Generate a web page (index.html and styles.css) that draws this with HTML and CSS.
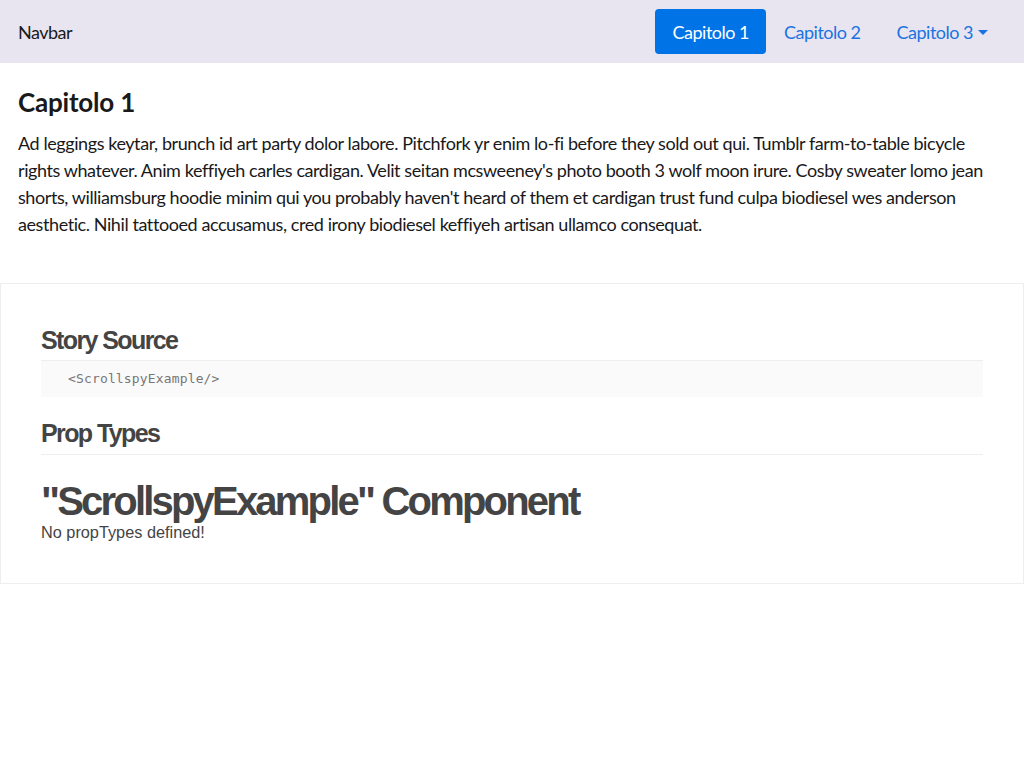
FILE: index.html
```html
<!DOCTYPE html>
<html lang="it">
<head>
<meta charset="utf-8">
<title>Scrollspy</title>
<link rel="stylesheet" href="styles.css">
</head>
<body>
<nav class="navbar">
  <a class="brand" href="#">Navbar</a>
  <ul class="nav">
    <li><a class="nav-link active" href="#c1">Capitolo 1</a></li>
    <li><a class="nav-link" href="#c2">Capitolo 2</a></li>
    <li><a class="nav-link dropdown" href="#c3">Capitolo 3<span class="caret"></span></a></li>
  </ul>
</nav>
<section class="chapter">
  <h4 class="chapter-title">Capitolo 1</h4>
  <p class="chapter-text">Ad leggings keytar, brunch id art party dolor labore. Pitchfork yr enim lo-fi before they sold out qui. Tumblr farm-to-table bicycle rights whatever. Anim keffiyeh carles cardigan. Velit seitan mcsweeney's photo booth 3 wolf moon irure. Cosby sweater lomo jean shorts, williamsburg hoodie minim qui you probably haven't heard of them et cardigan trust fund culpa biodiesel wes anderson aesthetic. Nihil tattooed accusamus, cred irony biodiesel keffiyeh artisan ullamco consequat.</p>
</section>
<div class="info">
  <h1 class="info-h">Story Source</h1>
  <pre class="source">&lt;ScrollspyExample/&gt;</pre>
  <h1 class="info-h info-h2">Prop Types</h1>
  <h2 class="comp-h">"ScrollspyExample" Component</h2>
  <p class="noprops">No propTypes defined!</p>
</div>
</body>
</html>
```
FILE: styles.css
```css
html, body { margin: 0; padding: 0; background: #fff; }
body { font-family: "Lato", "Open Sans", sans-serif; color: #19191a; }

.navbar {
  height: 63px;
  background: #e8e5f1;
  display: flex;
  align-items: center;
  justify-content: space-between;
  padding: 0 18px 0 18px;
  box-sizing: border-box;
}
.brand { color: #19191a; text-decoration: none; font-size: 18px; letter-spacing: -0.5px; }
.nav { list-style: none; margin: 0; padding: 0; display: flex; align-items: center; }
.nav-link {
  display: flex; align-items: center;
  height: 45px; padding: 0 18px; box-sizing: border-box;
  color: #1a73e0; text-decoration: none; font-size: 18px; letter-spacing: -0.5px;
  border-radius: 4px;
}
.nav-link.active { background: #0073e6; color: #fff; padding: 0 17px 0 18px; }
.caret {
  display: inline-block; margin-left: 5px; margin-top: 1px;
  border-left: 5px solid transparent; border-right: 5px solid transparent;
  border-top: 5px solid #1a73e0;
}

.chapter { padding: 24px 18px 45px; }
.chapter-title { margin: 0 0 13px; font-size: 26px; font-weight: 700; line-height: 30px; color: #19191a; letter-spacing: -0.2px; }
.chapter-text { margin: 0; font-size: 18px; line-height: 27px; letter-spacing: -0.42px; }

.info {
  margin: 0;
  border: 1px solid #eee;
  box-shadow: 0 2px 3px rgba(0,0,0,0.05);
  padding: 40px 40px 41px;
  font-family: -apple-system, "Helvetica Neue", "Liberation Sans", Arial, sans-serif;
  color: #444;
}
.info-h {
  margin: 0; font-size: 25px; font-weight: 700; letter-spacing: -1.6px;
  line-height: 32px; padding-bottom: 4px;
  border-bottom: 1px solid #eee;
}
.info-h2 { padding-bottom: 5px; }
.source {
  margin: 0 0 20px; background: #fafafa; padding: 11px 27px;
  font-family: "DejaVu Sans Mono", monospace; font-size: 13px; letter-spacing: 0.15px; color: #777; line-height: 14px;
}
.comp-h { margin: 24px 0 0; font-size: 40px; font-weight: 700; letter-spacing: -2.8px; line-height: 44px; }
.noprops { margin: 0; font-size: 16.3px; line-height: 19px; color: #444; }
```
